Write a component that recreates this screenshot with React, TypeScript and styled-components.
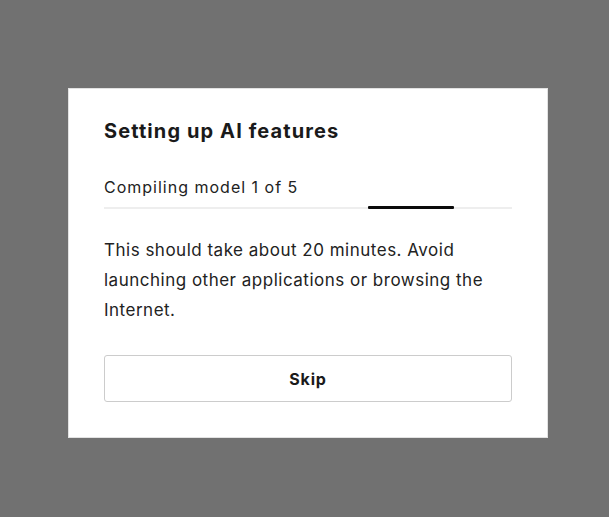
import React from "react";
import styled, { createGlobalStyle } from "styled-components";

const Global = createGlobalStyle`
  html, body { margin: 0; padding: 0; }
  body { background: #717171; font-family: Inter, "Noto Sans", sans-serif; }
`;

const Backdrop = styled.div`
  width: 609px;
  height: 517px;
  box-sizing: border-box;
  padding: 88px 0 0 68px;
  background: #717171;
`;

const Dialog = styled.div`
  width: 480px;
  height: 350px;
  box-sizing: border-box;
  background: #fff;
  border: 1px solid #e2e2e2;
  padding: 28px 35px 0 35px;
  display: flex;
  flex-direction: column;
`;

const Title = styled.h2`
  margin: 0;
  font-size: 20px;
  font-weight: 700;
  line-height: 28px;
  color: #1a1a1a;
  letter-spacing: 1.1px;
`;

const Label = styled.div`
  margin-top: 32px;
  font-size: 16px;
  line-height: 20px;
  color: #222;
  letter-spacing: 1px;
`;

const Track = styled.div`
  position: relative;
  margin-top: 10px;
  height: 2px;
  background: #eeeeee;
`;

const Fill = styled.div`
  position: absolute;
  top: -1px;
  height: 3px;
  background: #0a0a0a;
  border-radius: 1px;
`;

const Body = styled.p`
  margin: 26px 0 0;
  font-size: 17px;
  line-height: 30px;
  color: #222;
  letter-spacing: 0.5px;
`;

const SkipButton = styled.button`
  margin-top: 30px;
  height: 47px;
  width: 100%;
  background: #fff;
  border: 1px solid #cccccc;
  border-radius: 3px;
  font-family: inherit;
  font-size: 16px;
  font-weight: 700;
  letter-spacing: 0.8px;
  color: #1a1a1a;
  cursor: pointer;
`;

export default function App() {
  const progress = { left: 264, width: 86 };
  return (
    <>
      <Global />
      <Backdrop>
        <Dialog>
          <Title>Setting up AI features</Title>
          <Label>Compiling model 1 of 5</Label>
          <Track>
            <Fill style={{ left: progress.left, width: progress.width }} />
          </Track>
          <Body>
            This should take about 20 minutes. Avoid launching other applications or browsing the Internet.
          </Body>
          <SkipButton>Skip</SkipButton>
        </Dialog>
      </Backdrop>
    </>
  );
}
